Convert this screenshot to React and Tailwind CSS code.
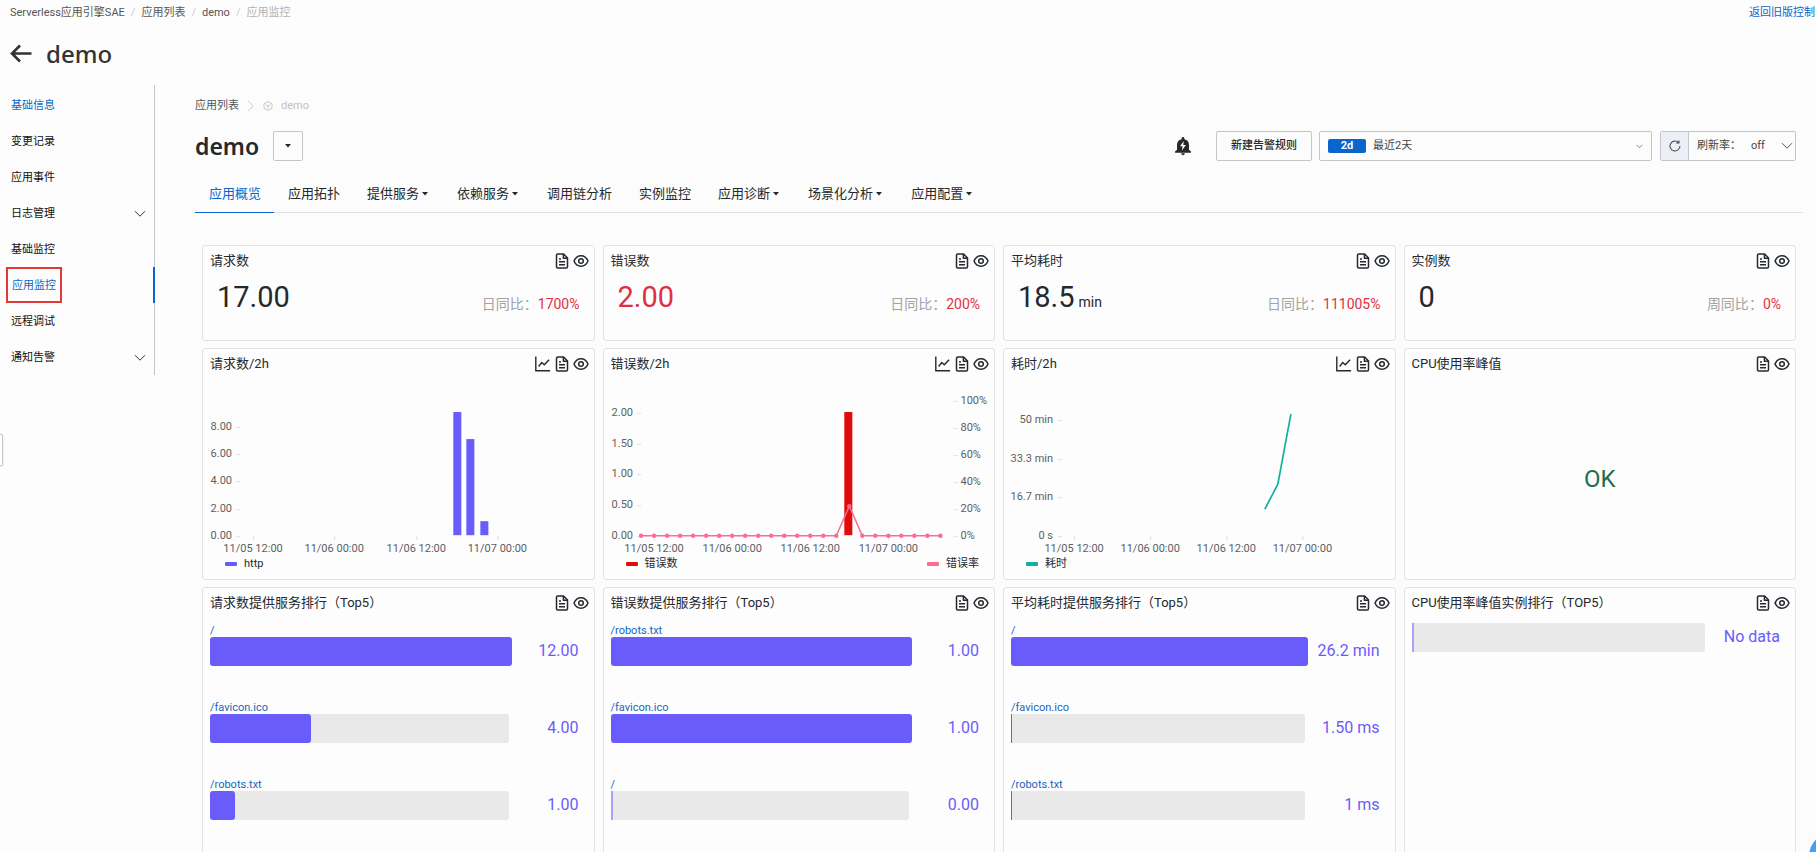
import React, { useState } from 'react'

const sideItems = [
  { label: '基础信息', link: true },
  { label: '变更记录' },
  { label: '应用事件' },
  { label: '日志管理', expandable: true },
  { label: '基础监控' },
  { label: '应用监控', active: true },
  { label: '远程调试' },
  { label: '通知告警', expandable: true },
]

const tabs = [
  { label: '应用概览' },
  { label: '应用拓扑' },
  { label: '提供服务', menu: true },
  { label: '依赖服务', menu: true },
  { label: '调用链分析' },
  { label: '实例监控' },
  { label: '应用诊断', menu: true },
  { label: '场景化分析', menu: true },
  { label: '应用配置', menu: true },
]

const stats = [
  { title: '请求数', value: '17.00', compare: '日同比', change: '1700%' },
  { title: '错误数', value: '2.00', compare: '日同比', change: '200%', danger: true },
  { title: '平均耗时', value: '18.5', unit: 'min', compare: '日同比', change: '111005%' },
  { title: '实例数', value: '0', compare: '周同比', change: '0%' },
]

const rankings = [
  {
    title: '请求数提供服务排行（Top5）',
    rows: [
      { name: '/', value: '12.00', percent: 100 },
      { name: '/favicon.ico', value: '4.00', percent: 33.4 },
      { name: '/robots.txt', value: '1.00', percent: 8.3 },
    ],
  },
  {
    title: '错误数提供服务排行（Top5）',
    rows: [
      { name: '/robots.txt', value: '1.00', percent: 100 },
      { name: '/favicon.ico', value: '1.00', percent: 100 },
      { name: '/', value: '0.00', percent: 0 },
    ],
  },
  {
    title: '平均耗时提供服务排行（Top5）',
    wide: true,
    rows: [
      { name: '/', value: '26.2 min', percent: 100 },
      { name: '/favicon.ico', value: '1.50 ms', percent: 0.3 },
      { name: '/robots.txt', value: '1 ms', percent: 0.3 },
    ],
  },
  {
    title: 'CPU使用率峰值实例排行（TOP5）',
    wide: true,
    rows: [{ name: '', value: 'No data', percent: 0 }],
  },
]

const dates = ['11/05 12:00', '11/06 00:00', '11/06 12:00', '11/07 00:00']

function Chevron({ className }) {
  return (
    <svg viewBox="0 0 12 8" className={className} fill="none" stroke="currentColor" aria-hidden="true">
      <path d="M1 1.2l5 5 5-5" />
    </svg>
  )
}

function Caret() {
  return (
    <svg viewBox="0 0 6 4" className="h-1 w-1.5" fill="currentColor" aria-hidden="true">
      <path d="M0 0h6L3 3.600z" />
    </svg>
  )
}

function PanelHeader({ title, chart }) {
  return (
    <div className="flex h-[30px] items-center justify-between pl-[7px] pr-[5px]">
      <h2 className="truncate text-[13px] leading-5">{title}</h2>
      <div className="flex items-center gap-1 text-[#24292e]">
        {chart && (
          <button type="button" aria-label="图表">
            <svg viewBox="0 0 16 16" className="size-4" fill="none" stroke="currentColor" strokeWidth="1.4">
              <path d="M0.8 0.5v14.3h14.3" />
              <path d="M3.600 10.500l3.200-4 2.500 2.200 4.800-5" />
            </svg>
          </button>
        )}
        <button type="button" aria-label="日志">
          <svg viewBox="0 0 14 16" className="h-4 w-3.5" fill="none" stroke="currentColor" strokeWidth="1.5" strokeLinejoin="round">
            <path d="M8.6 1H2.8a1.3 1.3 0 0 0-1.3 1.3v11.4A1.3 1.3 0 0 0 2.8 15h8.4a1.3 1.3 0 0 0 1.3-1.3V5z" />
            <path d="M8.4 1v4.2h4.1M4 6h2M4 8.8h6M4 11.8h6" />
          </svg>
        </button>
        <button type="button" aria-label="查看">
          <svg viewBox="0 0 16 14" className="h-3.5 w-4" fill="none" stroke="currentColor" strokeWidth="1.5">
            <path d="M1 7c1.4-3.300 4-5.200 7-5.200s5.600 1.900 7 5.200c-1.400 3.300-4 5.200-7 5.200S2.400 10.300 1 7z" />
            <circle cx="8" cy="7" r="2.300" />
          </svg>
        </button>
      </div>
    </div>
  )
}

function Panel({ title, chart, className, children }) {
  return (
    <section className={`flex min-w-0 flex-col rounded-[3px] border border-[#e1e2e3] bg-[#fdfdfd] ${className}`}>
      <PanelHeader title={title} chart={chart} />
      {children}
    </section>
  )
}

function Axis({ left, leftX, right, xs, tickX }) {
  return (
    <g fontSize="11" fill="#5c5f63">
      {left.map((t) => (
        <g key={t.text}>
          <text x={leftX} y={t.y + 4} textAnchor="end">{t.text}</text>
          <path d={`M${tickX} ${t.y + 1.5}h4`} stroke="#e0e0e0" />
        </g>
      ))}
      {right && right.map((t) => (
        <g key={t.text}>
          <text x="356" y={t.y + 4}>{t.text}</text>
          <path d={`M349 ${t.y + 1.5}h4`} stroke="#e0e0e0" />
        </g>
      ))}
      {xs.map((x, i) => (
        <g key={x}>
          <path d={`M${x + 0.5} 157v4`} stroke="#dcdcdc" />
          <text x={x} y="173" textAnchor="middle">{dates[i]}</text>
        </g>
      ))}
    </g>
  )
}

function Legend({ color, children }) {
  return (
    <span className="flex items-center gap-[7px] text-[11px] leading-4">
      <i className={`h-1 w-3 rounded-[1px] ${color}`} />
      {children}
    </span>
  )
}

function RequestChart() {
  return (
    <>
      <svg viewBox="0 0 390 176" className="w-full" role="img" aria-label="请求数/2h">
        <Axis
          left={[
            { text: '8.00', y: 47 },
            { text: '6.00', y: 74 },
            { text: '4.00', y: 101 },
            { text: '2.00', y: 129 },
            { text: '0.00', y: 156 },
          ]}
          leftX={29}
          tickX={33}
          xs={[50, 131, 213, 294]}
        />
        <g fill="#6a5cfa">
          <rect x="250" y="33" width="8" height="123" />
          <rect x="263" y="60" width="8" height="96" />
          <rect x="277" y="142" width="8" height="14" />
        </g>
      </svg>
      <div className="flex pt-px pr-[15px] pl-[22px]">
        <Legend color="bg-[#6a5cfa]">http</Legend>
      </div>
    </>
  )
}

function ErrorChart() {
  const points = Array.from({ length: 24 }, (_, i) => [37 + i * 13, i === 16 ? 127 : 156.5])
  return (
    <>
      <svg viewBox="0 0 390 176" className="w-full" role="img" aria-label="错误数/2h">
        <Axis
          left={[
            { text: '2.00', y: 33 },
            { text: '1.50', y: 64 },
            { text: '1.00', y: 94 },
            { text: '0.50', y: 125 },
            { text: '0.00', y: 156 },
          ]}
          leftX={29}
          tickX={33}
          right={[
            { text: '100%', y: 21 },
            { text: '80%', y: 48 },
            { text: '60%', y: 75 },
            { text: '40%', y: 102 },
            { text: '20%', y: 129 },
            { text: '0%', y: 156 },
          ]}
          xs={[50, 128, 206, 284]}
        />
        <rect x="240" y="33" width="8" height="123" fill="#e00b0b" />
        <polyline points={points.map((p) => p.join(',')).join(' ')} fill="none" stroke="#ff6a92" strokeWidth="1.5" />
        {points.map(([x, y]) => (
          <circle key={x} cx={x} cy={y} r="2.200" fill="#ff6a92" />
        ))}
      </svg>
      <div className="flex justify-between pt-px pr-[15px] pl-[22px]">
        <Legend color="bg-[#e00b0b]">错误数</Legend>
        <Legend color="bg-[#ff6a92]">错误率</Legend>
      </div>
    </>
  )
}

function DurationChart() {
  return (
    <>
      <svg viewBox="0 0 390 176" className="w-full" role="img" aria-label="耗时/2h">
        <Axis
          left={[
            { text: '50 min', y: 40 },
            { text: '33.3 min', y: 79 },
            { text: '16.7 min', y: 117 },
            { text: '0 s', y: 156 },
          ]}
          leftX={49}
          tickX={54}
          xs={[70, 146, 222, 298]}
        />
        <polyline points="260.500,130 273.500,105 286.500,35" fill="none" stroke="#12b0a4" strokeWidth="1.700" />
      </svg>
      <div className="flex pt-px pr-[15px] pl-[22px]">
        <Legend color="bg-[#12b0a4]">耗时</Legend>
      </div>
    </>
  )
}

function RankRow({ row, wide }) {
  return (
    <li className="mb-[34px]">
      {row.name && (
        <a href="#" className="block h-3.5 text-[11px] leading-4 text-[#1566c0]">{row.name}</a>
      )}
      <div className="flex items-center">
        <div className="relative h-[29px] flex-1">
          <div className="mr-[3px] h-full rounded-[3px] bg-[#e9e9e9]" />
          <div
            className={`absolute inset-y-0 left-0 ${
              row.percent > 1 ? 'rounded-[3px] bg-[#6a5cfa]' : row.percent > 0 ? 'bg-[#6a5cfa]' : 'min-w-0.5 bg-[#aaa2f8]'
            }`}
            style={{ width: `${row.percent}%` }}
          />
        </div>
        <span className={`pb-0.5 text-right text-[16px] leading-5 text-[#6a5cfa] ${wide ? 'w-[72px]' : 'w-[67px]'}`}>
          {row.value}
        </span>
      </div>
    </li>
  )
}

export default function App() {
  const [tab, setTab] = useState('应用概览')
  const [rate, setRate] = useState('off')

  return (
    <div className="h-screen overflow-hidden bg-[#fdfdfd] font-[Roboto,'Noto_Sans_CJK_SC',sans-serif] text-[#24292e]">
      <header>
        <div className="flex h-[26px] items-center justify-between pl-2.5 text-[11px] whitespace-nowrap text-[#555]">
          <nav className="flex items-center gap-1.5">
            <a href="#">Serverless应用引擎SAE</a>
            <span className="text-[#ccc]">/</span>
            <a href="#">应用列表</a>
            <span className="text-[#ccc]">/</span>
            <a href="#">demo</a>
            <span className="text-[#ccc]">/</span>
            <span className="text-[#b3b3b3]">应用监控</span>
          </nav>
          <a href="#" className="-mr-2.5 text-[#0a66cc]">返回旧版控制台</a>
        </div>
        <div className="flex h-[59px] items-center gap-3.5 pb-1 pl-2.5">
          <button type="button" aria-label="返回" className="text-[#333]">
            <svg viewBox="0 0 22 20" className="h-5 w-[22px]" fill="none" stroke="currentColor" strokeWidth="2.600">
              <path d="M21.500 9.500H2.500M10 1.500l-8 8 8 8" />
            </svg>
          </button>
          <h1 className="font-['Noto_Sans',sans-serif] text-2xl font-medium text-[#333]">demo</h1>
        </div>
      </header>

      <div className="flex">
        <aside className="w-[155px] shrink-0 self-start border-r border-[#c0c6cc] pt-0.5">
          <ul>
            {sideItems.map((item) => (
              <li key={item.label} className={item.active ? '-mr-px border-r-2 border-[#0a66cc]' : ''}>
                <a
                  href="#"
                  className={`flex h-9 items-center justify-between text-[11px] ${
                    item.active ? 'pl-1.5' : 'pt-0.5 pr-2 pl-[11px]'
                  } ${item.active || item.link ? 'text-[#0a66cc]' : 'text-[#111]'}`}
                >
                  {item.active ? (
                    <span className="flex h-9 items-center border-2 border-[#e53935] px-1 pt-0.5">{item.label}</span>
                  ) : (
                    item.label
                  )}
                  {item.expandable && <Chevron className="h-2 w-3 text-[#333]" />}
                </a>
              </li>
            ))}
          </ul>
        </aside>

        <main className="ml-[18px] min-w-0 flex-1 bg-[#fcfcfc] pr-[13px] pl-[22px]">
          <nav className="flex h-10 items-center pt-0.5 text-[11px] text-[#555]">
            <a href="#">应用列表</a>
            <Chevron className="mx-1.5 h-2.5 w-3 -rotate-90 text-[#ccc]" />
            <svg viewBox="0 0 12 12" className="mr-2 size-2.5 text-[#bbb]" fill="none" stroke="currentColor" aria-hidden="true">
              <path d="M6 .7l4.800 2.600v5.400L6 11.300 1.200 8.700V3.300zM3.500 4.500L6 6l2.500-1.500M6 6v3" />
            </svg>
            <span className="text-[#c2c2c2]">demo</span>
          </nav>

          <div className="flex h-11 items-center pr-[7px] pb-0.5">
            <h2 className="font-['Noto_Sans',sans-serif] text-[23px] font-semibold">demo</h2>
            <button type="button" aria-label="切换应用" className="ml-3.5 flex h-[30px] w-[30px] items-center justify-center rounded-[2px] border border-[#c0c6cc]">
              <Caret />
            </button>

            <div className="ml-auto flex items-center text-[11px]">
              <button type="button" aria-label="告警" className="mr-[22px]">
                <svg viewBox="0 0 24 24" className="size-[22px]">
                  <path fill="#24292e" d="M12 22c1.100 0 2-.900 2-2h-4c0 1.100.900 2 2 2zm6.500-6v-5.500c0-3.070-1.900-5.140-5-5.820V3.800c0-.830-.670-1.500-1.500-1.500s-1.500.670-1.500 1.500v.880c-3.100.680-5 2.740-5 5.820V16l-2.200 2v1.300h17.400V18z" />
                  <path fill="#fff" d="M12.800 6.500L8.800 12.300h2.700L10.800 16.800l4.400-6h-2.900z" />
                </svg>
              </button>
              <button type="button" className="mr-[7px] h-[30px] rounded-[2px] border border-[#c0c6cc] px-[14px] font-medium">
                新建告警规则
              </button>
              <button type="button" className="mr-2 flex h-[30px] w-[333px] items-center rounded-[2px] border border-[#c0c6cc] px-2 text-[#444]">
                <span className="mr-[7px] w-[38px] rounded-[2px] bg-[#0a66cc] text-center leading-[14px] font-bold text-white">2d</span>
                最近2天
                <Chevron className="ml-auto h-[5px] w-[7px] text-[#444]" />
              </button>
              <div className="flex h-[30px] items-center rounded-[2px] border border-[#c0c6cc] text-[#444]">
                <button type="button" aria-label="刷新" className="flex h-full w-7 items-center justify-center border-r border-[#c0c6cc] bg-[#eceff6]">
                  <svg viewBox="0 0 14 14" className="size-3" fill="none" stroke="currentColor" strokeWidth="1.200">
                    <path d="M11.200 3A5.800 5.800 0 1 0 12.800 7M11.600.600v3H8.400" />
                  </svg>
                </button>
                <label htmlFor="rate" className="pl-2">刷新率：</label>
                <div className="flex items-center pr-0.5">
                  <select
                    id="rate"
                    value={rate}
                    onChange={(e) => setRate(e.target.value)}
                    className="w-10 appearance-none bg-transparent pl-2.5 outline-none"
                  >
                    <option>off</option>
                    <option>10s</option>
                    <option>30s</option>
                  </select>
                  <Chevron className="h-2 w-3 text-[#555]" />
                </div>
              </div>
            </div>
          </div>

          <nav className="flex h-11 border-b border-[#e0e1e3]">
            {tabs.map((t) => (
              <button
                key={t.label}
                type="button"
                onClick={() => setTab(t.label)}
                className={`-mb-px flex items-center gap-[3px] pt-[6px] pl-[14px] text-[13px] whitespace-nowrap ${
                  t.menu ? 'pr-[15px]' : 'pr-[13px]'
                } ${tab === t.label ? 'border-b border-[#0a66cc] text-[#0a66cc]' : ''}`}
              >
                {t.label}
                {t.menu && <Caret />}
              </button>
            ))}
          </nav>

          <div className="mx-[7px] mt-8 grid grid-cols-4 gap-x-2 gap-y-[7px]">
            {stats.map((s) => (
              <Panel key={s.title} title={s.title} className="h-[96px]">
                <div className="flex items-end justify-between pr-3.5 pl-3.5">
                  <p className={`text-[29px] leading-[42px] ${s.danger ? 'text-[#e02f44]' : ''}`}>
                    {s.value}
                    {s.unit && <span className="ml-1 text-sm">{s.unit}</span>}
                  </p>
                  <p className="text-sm leading-7 text-[#a3a3a3]">
                    {s.compare}：<span className="text-[#e02f44]">{s.change}</span>
                  </p>
                </div>
              </Panel>
            ))}

            <Panel title="请求数/2h" chart className="h-[232px]">
              <RequestChart />
            </Panel>
            <Panel title="错误数/2h" chart className="h-[232px]">
              <ErrorChart />
            </Panel>
            <Panel title="耗时/2h" chart className="h-[232px]">
              <DurationChart />
            </Panel>
            <Panel title="CPU使用率峰值" className="h-[232px]">
              <p className="flex flex-1 items-center justify-center text-2xl text-[#1f6f4f]">OK</p>
            </Panel>

            {rankings.map((r) => (
              <Panel key={r.title} title={r.title} className="h-[420px]">
                <ul className="pt-[5px] pr-[15px] pl-[7px]">
                  {r.rows.map((row) => (
                    <RankRow key={row.name} row={row} wide={r.wide} />
                  ))}
                </ul>
              </Panel>
            ))}
          </div>
        </main>
      </div>

      {/* drawer handle and help bubble float over the page */}
      <button type="button" aria-label="展开" className="fixed top-[434px] left-0 h-8 w-[3px] rounded-r-[2px] border border-l-0 border-[#c0c6cc] bg-white shadow" />
      <button type="button" aria-label="帮助" className="fixed -right-[39px] -bottom-[27px] size-[46px] rounded-full bg-[#4a9bff]" />
    </div>
  )
}
